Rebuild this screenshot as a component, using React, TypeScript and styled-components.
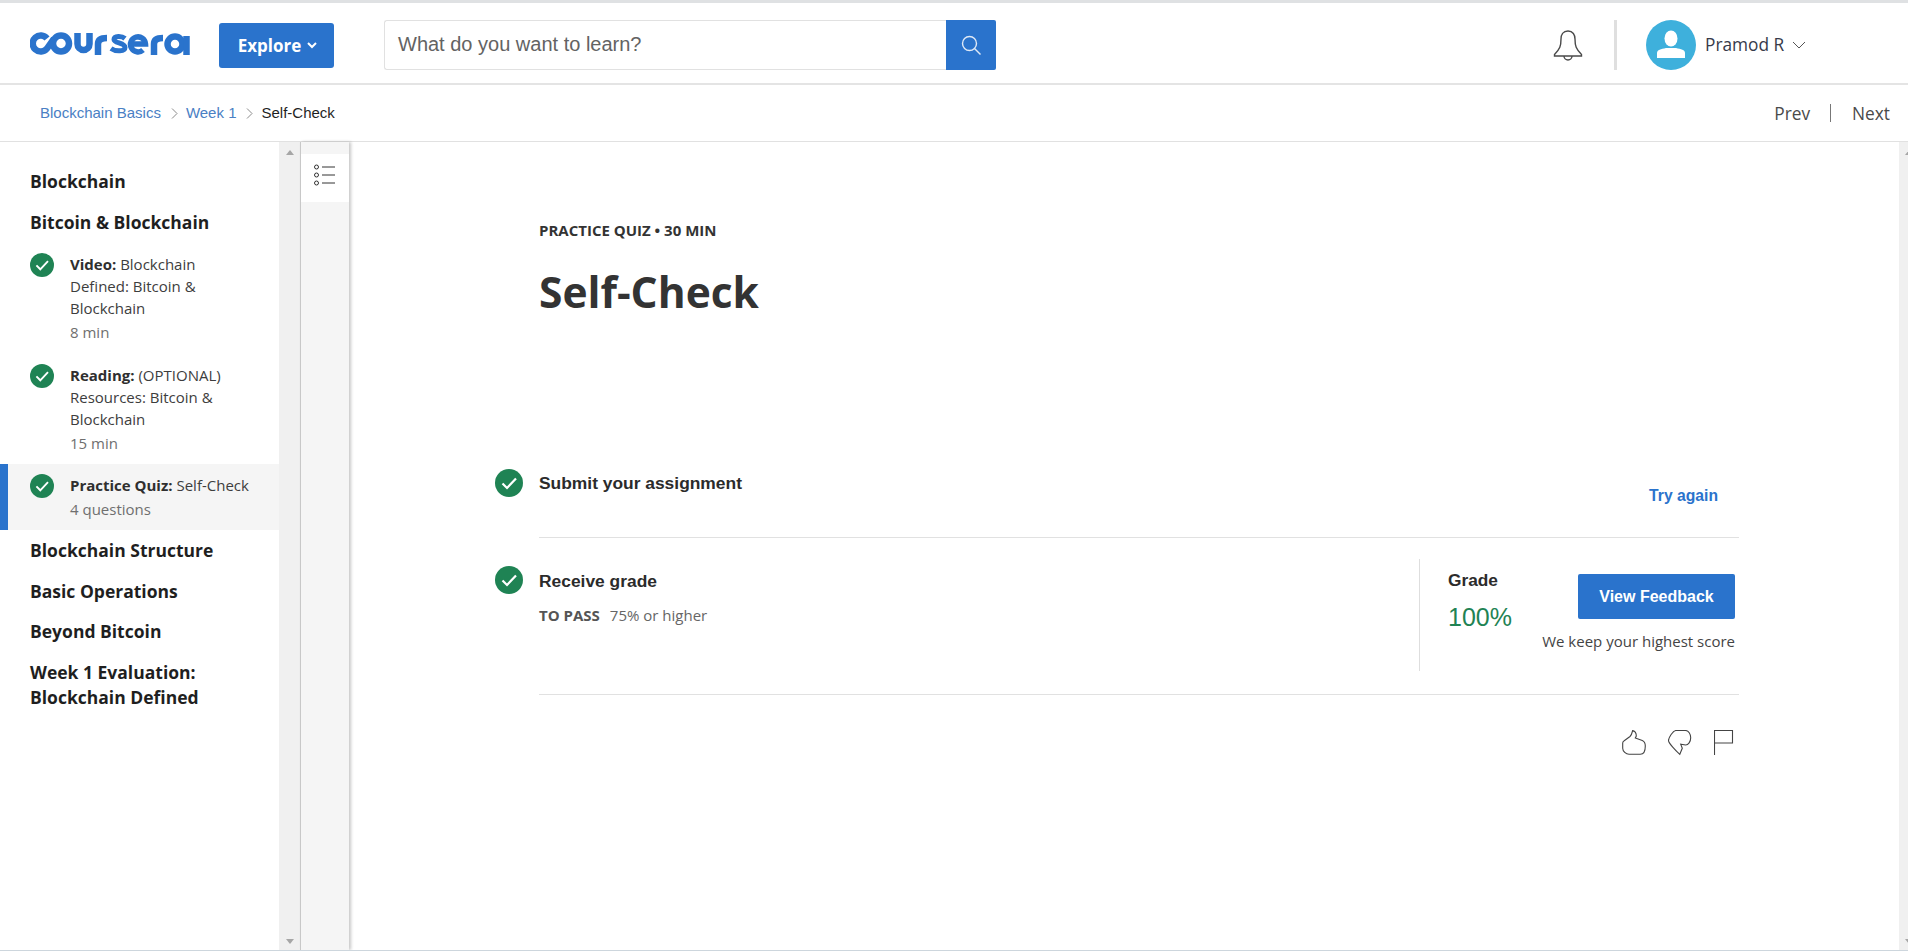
import styled, { createGlobalStyle } from "styled-components";

const GlobalStyle = createGlobalStyle`
  html, body {
    margin: 0;
    padding: 0;
    background: white;
    overflow: hidden;
  }
  * {
    box-sizing: border-box;
  }
`;

const blue = "#2a73cc";
const green = "#1f8354";
const openSans = `"Open Sans", "Liberation Sans", sans-serif`;
const arial = `"Liberation Sans", Arial, sans-serif`;

const Page = styled.div`
  height: 951px;
  display: flex;
  flex-direction: column;
  border-top: 3px solid #dfe1e3;
  border-bottom: 1px solid #cdd6dd;
  overflow: hidden;
`;

const Header = styled.header`
  height: 82px;
  flex: none;
  display: flex;
  align-items: center;
  padding: 3px 0 0 30px;
  border-bottom: 2px solid #e4e4e4;
`;

const Logo = styled.svg`
  width: 160px;
  height: 23px;
  flex: none;
  margin-right: 29px;
  margin-top: -3px;
`;

const Explore = styled.button`
  width: 115px;
  height: 45px;
  flex: none;
  margin: 1px 50px 0 0;
  border: 0;
  border-radius: 3px;
  background: ${blue};
  color: white;
  font: 700 17px ${openSans};
  display: flex;
  align-items: center;
  justify-content: center;
  gap: 6px;
  padding: 0 0 0 2px;
`;

const Search = styled.div`
  width: 612px;
  height: 50px;
  flex: none;
  display: flex;
`;

const SearchInput = styled.div`
  flex: 1;
  border: 1px solid #e1e1e1;
  border-right: 0;
  border-radius: 3px 0 0 3px;
  padding-left: 13px;
  display: flex;
  align-items: center;
  font: 400 20px ${arial};
  color: #636363;
`;

const SearchButton = styled.div`
  width: 50px;
  background: ${blue};
  border-radius: 0 2px 2px 0;
  display: flex;
  align-items: center;
  justify-content: center;
`;

const Account = styled.div`
  margin-left: auto;
  width: 355px;
  flex: none;
  display: flex;
  align-items: center;
`;

const VerticalBar = styled.div`
  width: 3px;
  height: 50px;
  background: #dfdfdf;
  margin: 0 29px 0 31px;
`;

const Avatar = styled.div`
  width: 50px;
  height: 50px;
  border-radius: 50%;
  background: #3eb0dc;
  display: flex;
  align-items: center;
  justify-content: center;
  overflow: hidden;
`;

const UserName = styled.span`
  font: 400 17.300px ${openSans};
  color: #373a4a;
  margin: 0 8px 0 9px;
`;

const Crumbs = styled.div`
  height: 57px;
  flex: none;
  display: flex;
  align-items: center;
  padding: 0 18px 0 40px;
  border-bottom: 1px solid #e1e1e1;
`;

const CrumbLink = styled.a`
  font: 400 15px ${arial};
  color: #4a80c4;
  margin-bottom: 2px;
`;

const CrumbSeparator = styled.svg`
  width: 7px;
  height: 11px;
  margin: 1px 8px 0 10px;
`;

const CrumbCurrent = styled.span`
  font: 400 15px ${arial};
  color: #1f1f1f;
  margin-bottom: 2px;
`;

const Pager = styled.div`
  margin-left: auto;
  display: flex;
  align-items: center;
  font: 400 17.300px ${openSans};
  color: #4a4a4a;
`;

const PagerBar = styled.span`
  width: 1px;
  height: 18px;
  background: #777;
  margin: 0 21px 0 20px;
`;

const Body = styled.div`
  flex: 1;
  min-height: 0;
  display: flex;
`;

const Sidebar = styled.nav`
  width: 279px;
  flex: none;
  padding-top: 27px;
`;

const ScrollTrack = styled.div<{ $narrow?: boolean }>`
  width: ${({ $narrow }) => ($narrow ? "9px" : "21px")};
  flex: none;
  background: #f0f0f0;
  display: flex;
  flex-direction: column;
  justify-content: space-between;
  align-items: ${({ $narrow }) => ($narrow ? "flex-start" : "center")};
  padding: 8px 0 6px ${({ $narrow }) => ($narrow ? "6px" : "0")};
  overflow: hidden;
`;

const Arrow = styled.span<{ $down?: boolean }>`
  width: 0;
  height: 0;
  flex: none;
  border-left: 4.5px solid transparent;
  border-right: 4.5px solid transparent;
  ${({ $down }) =>
    $down ? "border-top: 5px solid #a6a6a6;" : "border-bottom: 5px solid #a6a6a6;"}
`;

const Rail = styled.div`
  width: 49px;
  flex: none;
  background: #f5f5f5;
  border-left: 1px solid #c8c8c8;
  box-shadow: 2px 0 3px rgba(0, 0, 0, 0.22);
  padding-top: 12px;
  position: relative;
`;

const RailButton = styled.div`
  height: 48px;
  background: white;
  display: flex;
  justify-content: center;
  padding-top: 10px;
`;

const Lesson = styled.div`
  font: 700 17.500px/25.500px ${openSans};
  color: #1f1f1f;
  padding: 0 30px;
  margin-bottom: 15px;
`;

const ItemList = styled.div`
  margin-top: 18px;
`;

const Item = styled.div<{ $active?: boolean }>`
  display: flex;
  gap: 16px;
  padding: ${({ $active }) => ($active ? "10px 0 10px 22px" : "0 0 21px 30px")};
  margin-bottom: ${({ $active }) => ($active ? "8px" : "0")};
  ${({ $active }) =>
    $active &&
    `
    background: #f5f5f5;
    border-left: 8px solid ${blue};
    margin-top: -11px;
  `}
`;

const CheckCircle = styled.svg<{ $size: number }>`
  width: ${({ $size }) => $size}px;
  height: ${({ $size }) => $size}px;
  flex: none;
`;

const ItemBody = styled.div`
  width: 182px;
`;

const ItemText = styled.div`
  font: 400 15px/22px ${openSans};
  color: #3d3d3d;
  b {
    font-weight: 700;
    color: #2f2f2f;
  }
`;

const ItemMeta = styled.div`
  font: 400 15px/22px ${openSans};
  color: #6f6f6f;
  margin-top: 2px;
`;

const Main = styled.main`
  flex: 1;
  min-width: 0;
  padding: 73px 160px 0 146px;
`;

const Eyebrow = styled.div`
  font: 700 15px/30px ${openSans};
  color: #333;
  margin-left: 44px;
`;

const Title = styled.h1`
  font: 700 42.500px/60px ${openSans};
  color: #333;
  margin: 17px 0 147px 44px;
`;

const Step = styled.section`
  display: flex;
  gap: 16px;
`;

const StepMarker = styled.div<{ $offset?: number }>`
  flex: none;
  padding-top: ${({ $offset }) => $offset ?? 0}px;
`;

const StepBody = styled.div`
  flex: 1;
  border-bottom: 1px solid #e1e1e1;
`;

const SubmitRow = styled.div`
  height: 68px;
  display: flex;
  justify-content: space-between;
`;

const StepTitle = styled.div`
  font: 700 17.400px/28px ${arial};
  color: #2b2b2b;
`;

const TryAgain = styled.a`
  font: 700 15.700px/20px ${arial};
  color: ${blue};
  margin: 17px 21px 0 0;
`;

const GradeRow = styled.div`
  padding: 21px 0 23px;
  display: flex;
`;

const GradeLeft = styled.div`
  flex: 1;
  padding-top: 8px;
`;

const PassLine = styled.div`
  font: 400 15px/20px ${openSans};
  color: #666;
  margin-top: 10px;
  b {
    font-weight: 700;
    color: #555;
    margin-right: 10px;
  }
`;

const GradePanel = styled.div`
  width: 320px;
  height: 112px;
  border-left: 1px solid #dedede;
  padding: 0 4px 0 28px;
  display: flex;
  justify-content: space-between;
`;

const GradeInfo = styled.div`
  padding-top: 8px;
`;

const GradeLabel = styled.div`
  font: 700 17.300px/26px ${arial};
  color: #2b2b2b;
`;

const GradeValue = styled.div`
  font: 400 25px/32px ${arial};
  color: ${green};
  margin-top: 8px;
`;

const Feedback = styled.div`
  display: flex;
  flex-direction: column;
  align-items: flex-end;
  padding-top: 15px;
`;

const FeedbackButton = styled.button`
  width: 157px;
  height: 45px;
  border: 0;
  border-radius: 2px;
  background: ${blue};
  color: white;
  font: 700 16px ${arial};
`;

const KeepNote = styled.div`
  font: 400 15px/20px ${openSans};
  color: #444;
  margin-top: 12px;
  white-space: nowrap;
`;

const Reactions = styled.div`
  display: flex;
  justify-content: flex-end;
  gap: 22px;
  padding: 35px 1px 0 0;
`;

const ReactionIcon = styled.svg`
  width: 24px;
  height: 26px;
`;

const Check = ({ size }: { size: number }) => (
  <CheckCircle $size={size} viewBox="0 0 28 28">
    <circle cx="14" cy="14" r="14" fill={green} />
    <path d="M7.500 14.500l4.500 4.500 9-9.500" fill="none" stroke="white" strokeWidth="2.200" />
  </CheckCircle>
);

const Crumb = () => (
  <CrumbSeparator viewBox="0 0 7 11">
    <path d="M1 0.500l5 5-5 5" fill="none" stroke="#8a8a8a" strokeWidth="1" />
  </CrumbSeparator>
);

const CourseraLogo = () => (
  <Logo viewBox="0 0 160 23">
    <g fill="none" stroke={blue} strokeWidth="6.500">
      <path d="M17 6.500a8 8 0 1 0 0 10l7-10" />
      <circle cx="31" cy="11.500" r="8" />
      <path d="M47.500 1v11a6 6 0 0 0 12 0V1" />
      <path d="M68 23V12c0-4 3-6 9-6" />
      <path d="M95 6.500c-3-2.500-11-3-11 1s11 3 11 8c0 4-9 4.500-14 1" strokeWidth="5" />
      <path d="M100 12h15.500a7.500 7.500 0 1 0-2.500 6" strokeWidth="5.500" />
      <path d="M124 23V12c0-4 3-6 9-6" />
      <circle cx="145" cy="12" r="7.500" />
      <path d="M156.500 4v19" />
    </g>
  </Logo>
);

const App = () => {
  return (
    <Page>
      <GlobalStyle />
      <Header>
        <CourseraLogo />
        <Explore>
          Explore
          <svg width="10" height="7" viewBox="0 0 10 7">
            <path d="M1 1l4 4 4-4" fill="none" stroke="white" strokeWidth="2" />
          </svg>
        </Explore>
        <Search>
          <SearchInput>What do you want to learn?</SearchInput>
          <SearchButton>
            <svg width="22" height="22" viewBox="0 0 22 22" fill="none" stroke="#dfe9f6" strokeWidth="1.400">
              <circle cx="9.500" cy="9.500" r="7" />
              <path d="M14.500 14.500l6 6" />
            </svg>
          </SearchButton>
        </Search>
        <Account>
          <svg width="30" height="32" viewBox="0 0 30 32" fill="none" stroke="#4a4a4a" strokeWidth="1.400">
            <path d="M15 2c-5 0-7 4-7 8 0 7-1 10-6.500 15.500v1.500h27v-1.500C23 20 22 17 22 10c0-4-2-8-7-8z" />
            <path d="M11 27a4 4 0 0 0 8 0" />
          </svg>
          <VerticalBar />
          <Avatar>
            <svg width="30" height="32" viewBox="0 0 30 32" fill="white">
              <ellipse cx="15" cy="9.500" rx="6.500" ry="8" />
              <path d="M1 29v-5c0-3 4-4 9-5h10c5 1 9 2 9 5v5z" />
            </svg>
          </Avatar>
          <UserName>Pramod R</UserName>
          <svg width="14" height="8" viewBox="0 0 14 8">
            <path d="M1 1l6 6 6-6" fill="none" stroke="#555" strokeWidth="1" />
          </svg>
        </Account>
      </Header>
      <Crumbs>
        <CrumbLink>Blockchain Basics</CrumbLink>
        <Crumb />
        <CrumbLink>Week 1</CrumbLink>
        <Crumb />
        <CrumbCurrent>Self-Check</CrumbCurrent>
        <Pager>
          Prev
          <PagerBar />
          Next
        </Pager>
      </Crumbs>
      <Body>
        <Sidebar>
          <Lesson>Blockchain</Lesson>
          <Lesson>Bitcoin &amp; Blockchain</Lesson>
          <ItemList>
            <Item>
              <Check size={24} />
              <ItemBody>
                <ItemText>
                  <b>Video:</b> Blockchain Defined: Bitcoin &amp; Blockchain
                </ItemText>
                <ItemMeta>8 min</ItemMeta>
              </ItemBody>
            </Item>
            <Item>
              <Check size={24} />
              <ItemBody>
                <ItemText>
                  <b>Reading:</b> (OPTIONAL) Resources: Bitcoin &amp; Blockchain
                </ItemText>
                <ItemMeta>15 min</ItemMeta>
              </ItemBody>
            </Item>
            <Item $active>
              <Check size={24} />
              <ItemBody>
                <ItemText>
                  <b>Practice Quiz:</b> Self-Check
                </ItemText>
                <ItemMeta>4 questions</ItemMeta>
              </ItemBody>
            </Item>
          </ItemList>
          <Lesson>Blockchain Structure</Lesson>
          <Lesson>Basic Operations</Lesson>
          <Lesson>Beyond Bitcoin</Lesson>
          <Lesson>
            Week 1 Evaluation:
            <br />
            Blockchain Defined
          </Lesson>
        </Sidebar>
        <ScrollTrack>
          <Arrow />
          <Arrow $down />
        </ScrollTrack>
        <Rail>
          <RailButton>
            <svg width="22" height="22" viewBox="0 0 22 22" fill="none" stroke="#333" strokeWidth="1">
              <circle cx="2.500" cy="3" r="2" />
              <circle cx="2.500" cy="11" r="2" />
              <circle cx="2.500" cy="19" r="2" />
              <path d="M8 3h13M8 11h13M8 19h13" />
            </svg>
          </RailButton>
        </Rail>
        <Main>
          <Eyebrow>PRACTICE QUIZ • 30 MIN</Eyebrow>
          <Title>Self-Check</Title>
          <Step>
            <StepMarker>
              <Check size={28} />
            </StepMarker>
            <StepBody>
              <SubmitRow>
                <StepTitle>Submit your assignment</StepTitle>
                <TryAgain>Try again</TryAgain>
              </SubmitRow>
            </StepBody>
          </Step>
          <Step>
            <StepMarker $offset={28}>
              <Check size={28} />
            </StepMarker>
            <StepBody>
              <GradeRow>
                <GradeLeft>
                  <StepTitle>Receive grade</StepTitle>
                  <PassLine>
                    <b>TO PASS</b>75% or higher
                  </PassLine>
                </GradeLeft>
                <GradePanel>
                  <GradeInfo>
                    <GradeLabel>Grade</GradeLabel>
                    <GradeValue>100%</GradeValue>
                  </GradeInfo>
                  <Feedback>
                    <FeedbackButton>View Feedback</FeedbackButton>
                    <KeepNote>We keep your highest score</KeepNote>
                  </Feedback>
                </GradePanel>
              </GradeRow>
            </StepBody>
          </Step>
          <Reactions>
            <ReactionIcon viewBox="0 0 24 26" fill="none" stroke="#444" strokeWidth="1.100">
              <path d="M.7 13c0-1 .6-1.700 1.500-2.200L8 6.500c1.200-1 2-3.200 2.700-6 2 .6 3.600 3 3.600 5.500l-1 2 7 2.500c1.500.6 3 2.600 3 5.500 0 5-2 8.300-5 8.300H7c-3 0-6.300-3-6.300-6z" />
            </ReactionIcon>
            <ReactionIcon viewBox="0 0 24 26" fill="none" stroke="#444" strokeWidth="1.100">
              <path d="M.5 10.500C.5 8 5 .5 8 .5h9.500c3 0 5.200 3.500 5.200 7.200 0 4-2.500 7.300-5 7.300l-5-.7 1.600 4-2.500 6C8 21 .5 13 .5 10.500z" />
            </ReactionIcon>
            <ReactionIcon viewBox="0 0 24 26" fill="none" stroke="#444" strokeWidth="1.100">
              <path d="M.5 25V.5h18V13H.5" />
            </ReactionIcon>
          </Reactions>
        </Main>
        <ScrollTrack $narrow>
          <Arrow />
          <Arrow $down />
        </ScrollTrack>
      </Body>
    </Page>
  );
};

export default App;
